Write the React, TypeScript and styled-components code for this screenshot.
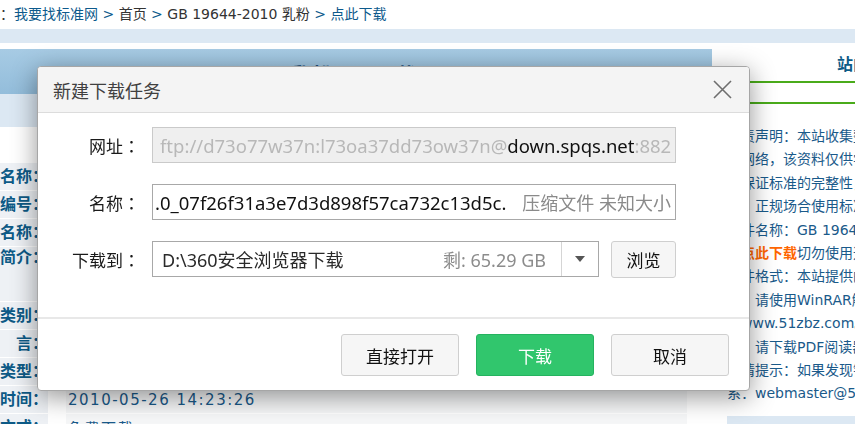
import styled, { createGlobalStyle } from "styled-components";

const GlobalStyle = createGlobalStyle`
  html, body {
    margin: 0;
    padding: 0;
    background: #fff;
    overflow: hidden;
  }
  body {
    font-family: "DejaVu Sans", "Noto Sans CJK SC", sans-serif;
  }
`;

/* ---------- page behind the dialog (scrolled right by 70px) ---------- */

const Page = styled.div`
  width: 940px;
  margin-left: -70px;
`;

const Crumbs = styled.div`
  height: 29px;
  line-height: 29px;
  padding-left: 14px;
  font-size: 14px;
  color: #333;
  white-space: nowrap;
`;

const CrumbLink = styled.span`
  color: #0d5a8c;
`;

const TopBand = styled.div`
  height: 14px;
  margin-bottom: 6px;
  background: #dce8f3;
`;

const Main = styled.div`
  display: flex;
  align-items: flex-start;
`;

const LeftCol = styled.div`
  width: 782px;
  flex: none;
`;

const ColHeader = styled.div`
  height: 45px;
  line-height: 54px;
  padding-left: 153px;
  background: linear-gradient(#a7cbe4, #93bddb);
  color: #1d4e78;
  font-size: 20px;
  font-weight: bold;
  letter-spacing: 2px;
  white-space: nowrap;
  overflow: hidden;
`;

const SubBand = styled.div`
  height: 33px;
  background: #dce8f3;
`;

const InfoTable = styled.div`
  width: 757px;
  margin-top: 36px;
  display: flex;
  flex-direction: column;
  gap: 1px;
`;

const InfoRow = styled.div<{ $tall?: boolean }>`
  display: grid;
  grid-template-columns: 118px 1fr;
  column-gap: 18px;
  height: ${(p) => (p.$tall ? 54 : 27)}px;
`;

const InfoLabel = styled.div<{ $tall?: boolean }>`
  display: flex;
  justify-content: flex-end;
  align-items: ${(p) => (p.$tall ? "flex-start" : "center")};
  line-height: 22px;
  overflow: hidden;
  white-space: nowrap;
  background: #eef1f5;
  color: #0d5a86;
  font-size: 16px;
  font-weight: bold;
`;

const InfoValue = styled.div`
  display: flex;
  align-items: center;
  padding-left: 2px;
  background: #f6f7f8;
  color: #1a5a8a;
  font-size: 15px;
  letter-spacing: 1.5px;
  white-space: nowrap;
  overflow: hidden;
`;

const RightCol = styled.div`
  margin-left: 15px;
  width: 200px;
  flex: none;
`;

const SideTitle = styled.div`
  margin-top: 6px;
  padding-left: 110px;
  line-height: 20px;
  color: #0d5a86;
  font-size: 16px;
  font-weight: bold;
  white-space: nowrap;
`;

const GreenRule = styled.div<{ $gap: number }>`
  height: 2px;
  margin-top: ${(p) => p.$gap}px;
  margin-left: -30px;
  background: #4aab1a;
`;

const SideText = styled.div`
  padding-top: 21px;
  font-size: 14px;
  line-height: 23.4px;
  color: #1a5a8a;
  white-space: nowrap;
`;

const Hot = styled.span`
  color: #ff6600;
  font-weight: bold;
`;

const SideBand = styled.div`
  height: 20px;
  margin-top: 10px;
  background: #dce8f3;
`;

/* ---------- dialog ---------- */

const Dialog = styled.div`
  position: fixed;
  left: 37px;
  top: 66px;
  width: 713px;
  height: 325px;
  box-sizing: border-box;
  display: flex;
  flex-direction: column;
  background: #fff;
  border: 1px solid #a6a6a6;
  border-radius: 4px;
  box-shadow: 0 6px 26px rgba(0, 0, 0, 0.42);
  overflow: hidden;
  font-family: "Noto Sans", "Noto Sans CJK SC", sans-serif;
  color: #222;
`;

const DialogHead = styled.div`
  height: 46px;
  box-sizing: border-box;
  display: flex;
  align-items: center;
  justify-content: space-between;
  padding: 0 17px 0 15px;
  background: #f4f4f4;
  border-bottom: 1px solid #dcdcdc;
`;

const DialogTitle = styled.div`
  font-size: 18px;
  color: #404040;
`;

const CloseButton = styled.div`
  width: 19px;
  height: 19px;
  display: flex;
`;

const DialogBody = styled.div`
  flex: 1;
  padding: 14px 73px 0 0;
`;

const Form = styled.div`
  display: grid;
  grid-template-columns: 102px 1fr;
  grid-auto-rows: 36px;
  column-gap: 12px;
  row-gap: 21px;
`;

const Label = styled.div`
  display: flex;
  align-items: center;
  justify-content: flex-end;
  font-size: 17px;
  color: #1a1a1a;
`;

const Colon = styled.span`
  font-family: "Noto Sans CJK JP", sans-serif;
`;

const Field = styled.div<{ $readOnly?: boolean }>`
  box-sizing: border-box;
  height: 36px;
  display: flex;
  align-items: center;
  border: 1px solid ${(p) => (p.$readOnly ? "#cacaca" : "#a8a8a8")};
  background: ${(p) => (p.$readOnly ? "#efefef" : "#fff")};
  overflow: hidden;
  white-space: nowrap;
  font-size: 18.5px;
`;

const UrlText = styled.div`
  padding-left: 7px;
  color: #b8b8b8;
`;

const Host = styled.span`
  color: #111;
`;

const NameText = styled.div`
  flex: 1;
  min-width: 0;
  overflow: hidden;
  padding-left: 2px;
  color: #111;
`;

const Meta = styled.div`
  padding: 0 4px 0 15px;
  font-size: 18px;
  color: #8a8a8a;
`;

const PathRow = styled.div`
  display: flex;
  gap: 12px;
`;

const PathText = styled.div`
  flex: 1;
  padding-left: 9px;
  font-size: 18px;
  color: #2a2a2a;
`;

const FreeSpace = styled.div`
  padding-right: 15px;
  font-size: 18px;
  color: #8c8c8c;
`;

const ArrowBox = styled.div`
  width: 36px;
  height: 100%;
  display: flex;
  align-items: center;
  justify-content: center;
  border-left: 1px solid #d5d5d5;

  &::after {
    content: "";
    border-left: 5px solid transparent;
    border-right: 5px solid transparent;
    border-top: 6px solid #555;
  }
`;

const Button = styled.button<{ $primary?: boolean }>`
  box-sizing: border-box;
  border-radius: 3px;
  border: 1px solid ${(p) => (p.$primary ? "#25b35f" : "#cfcfcf")};
  background: ${(p) => (p.$primary ? "#31c66d" : "#f6f6f6")};
  color: ${(p) => (p.$primary ? "#fff" : "#111")};
  font-family: "Noto Sans CJK SC", sans-serif;
  font-size: 17px;
  padding: 0;
  cursor: pointer;
`;

const BrowseButton = styled(Button)`
  width: 65px;
  height: 37px;
`;

const DialogFoot = styled.div`
  height: 73px;
  box-sizing: border-box;
  display: flex;
  justify-content: flex-end;
  align-items: flex-start;
  gap: 17px;
  padding: 15px 20px 0 0;
  border-top: 2px solid #e8e8e8;
`;

const FootButton = styled(Button)`
  width: 118px;
  height: 42px;
`;

const infoRows = [
  { label: "标准名称：", value: "乳粉" },
  { label: "标准编号：", value: "GB 19644-2010" },
  { label: "英文名称：", value: "Milk powder" },
  { label: "标准简介：", value: "本标准适用于全脂、脱脂、部分脱脂乳粉和调制乳粉。", tall: true },
  { label: "标准类别：", value: "食品卫生" },
  { label: "语　　言：", value: "中文" },
  { label: "文件类型：", value: "PDF" },
  { label: "更新时间：", value: "2010-05-26 14:23:26" },
  { label: "下载方式：", value: "免费下载" },
];

const sideLines = [
  "免责声明：本站收集整理",
  "于网络，该资料仅供学习",
  "不保证标准的完整性，",
  "在，正规场合使用标准",
  "文件名称：GB 19644-2010",
  null,
  "文件格式：本站提供的",
  "载，请使用WinRAR解压",
  "址www.51zbz.com。",
  "器，请下载PDF阅读器",
  "友情提示：如果发现错误",
  "系：webmaster@51zbz.com",
];

export default function App() {
  return (
    <>
      <GlobalStyle />
      <Page>
        <Crumbs>
          当前位置：<CrumbLink>我要找标准网 &gt; </CrumbLink>首页
          <CrumbLink> &gt; </CrumbLink>GB 19644-2010 乳粉
          <CrumbLink> &gt; 点此下载</CrumbLink>
        </Crumbs>
        <TopBand />
        <Main>
          <LeftCol>
            <ColHeader>GB 19644-2010 乳粉 — 下载</ColHeader>
            <SubBand />
            <InfoTable>
              {infoRows.map((r) => (
                <InfoRow key={r.label} $tall={r.tall}>
                  <InfoLabel $tall={r.tall}>{r.label}</InfoLabel>
                  <InfoValue>{r.value}</InfoValue>
                </InfoRow>
              ))}
            </InfoTable>
          </LeftCol>
          <RightCol>
            <SideTitle>站内公告</SideTitle>
            <GreenRule $gap={6} />
            <GreenRule $gap={19} />
            <SideText>
              {sideLines.map((line, i) =>
                line === null ? (
                  <div key={i}>
                    请<Hot>点此下载</Hot>切勿使用迅雷
                  </div>
                ) : (
                  <div key={i}>{line}</div>
                )
              )}
            </SideText>
            <SideBand />
          </RightCol>
        </Main>
      </Page>

      <Dialog>
        <DialogHead>
          <DialogTitle>新建下载任务</DialogTitle>
          <CloseButton>
            <svg width="19" height="19" viewBox="0 0 19 19">
              <path d="M1 1L18 18M18 1L1 18" stroke="#6e6e6e" strokeWidth="1.6" fill="none" />
            </svg>
          </CloseButton>
        </DialogHead>
        <DialogBody>
          <Form>
            <Label>
              网址<Colon>：</Colon>
            </Label>
            <Field $readOnly>
              <UrlText>
                ftp://d73o77w37n:l73oa37dd73ow37n@<Host>down.spqs.net</Host>:882
              </UrlText>
            </Field>

            <Label>
              名称<Colon>：</Colon>
            </Label>
            <Field>
              <NameText>.0_07f26f31a3e7d3d898f57ca732c13d5c.</NameText>
              <Meta>压缩文件 未知大小</Meta>
            </Field>

            <Label>
              下载到<Colon>：</Colon>
            </Label>
            <PathRow>
              <Field style={{ flex: 1 }}>
                <PathText>D:\360安全浏览器下载</PathText>
                <FreeSpace>剩: 65.29 GB</FreeSpace>
                <ArrowBox />
              </Field>
              <BrowseButton>浏览</BrowseButton>
            </PathRow>
          </Form>
        </DialogBody>
        <DialogFoot>
          <FootButton>直接打开</FootButton>
          <FootButton $primary>下载</FootButton>
          <FootButton>取消</FootButton>
        </DialogFoot>
      </Dialog>
    </>
  );
}
